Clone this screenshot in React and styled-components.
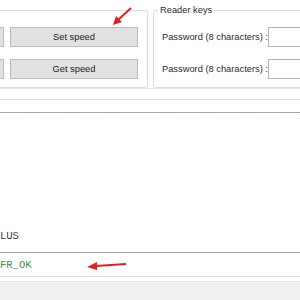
import React from "react";
import styled, { createGlobalStyle } from "styled-components";

const Global = createGlobalStyle`
  html, body {
    margin: 0;
    padding: 0;
    background: #ffffff;
  }
  body {
    font-family: "Liberation Sans", Arial, sans-serif;
    color: #2b2b2b;
  }
`;

export default function App() {
  return (
    <Window>
      <Global />
      <TopPanel>
        <SpeedGroup>
          <Button />
          <Button>Set speed</Button>
          <Button />
          <Button>Get speed</Button>
        </SpeedGroup>
        <KeysGroup>
          <Legend>Reader keys</Legend>
          <KeyRow>
            <Label>Password (8 characters) :</Label>
            <Input />
          </KeyRow>
          <KeyRow>
            <Label>Password (8 characters) :</Label>
            <Input />
          </KeyRow>
        </KeysGroup>
      </TopPanel>
      <Spacer />
      <Splitter />
      <LogArea>
        <LogLine>LUS</LogLine>
      </LogArea>
      <StatusBox>
        <StatusText>FR_OK</StatusText>
      </StatusBox>
      <BottomBar />

      {/* annotation arrows */}
      <Arrow style={{ left: 108, top: 4 }} width="28" height="24" viewBox="0 0 28 24">
        <line x1="23" y1="4" x2="10" y2="16" stroke="#e02020" strokeWidth="2" />
        <polygon points="5,21 8,12 14,18" fill="#e02020" />
      </Arrow>
      <Arrow style={{ left: 84, top: 259 }} width="46" height="14" viewBox="0 0 46 14">
        <line x1="42" y1="5" x2="12" y2="7" stroke="#e02020" strokeWidth="2" />
        <polygon points="3,8 13,3 13,11" fill="#e02020" />
      </Arrow>
    </Window>
  );
}

const Window = styled.div`
  position: relative;
  width: 300px;
  height: 300px;
  overflow: hidden;
  background: #ffffff;
  display: flex;
  flex-direction: column;
`;

const TopPanel = styled.div`
  display: flex;
  align-items: flex-start;
  height: 88px;
  flex-shrink: 0;
`;

const SpeedGroup = styled.div`
  box-sizing: border-box;
  flex-shrink: 0;
  margin-left: -60px;
  margin-top: 10px;
  width: 208px;
  height: 78px;
  border: 1px solid #dcdcdc;
  border-radius: 3px;
  padding: 16px 9px 0 8px;
  display: grid;
  grid-template-columns: 55px 128px;
  grid-auto-rows: 20px;
  column-gap: 6px;
  row-gap: 12px;
`;

const Button = styled.div`
  box-sizing: border-box;
  background: #e1e1e1;
  border: 1px solid #bcbcbc;
  display: flex;
  align-items: center;
  justify-content: center;
  font-size: 9.3px;
  color: #1e1e1e;
`;

const KeysGroup = styled.fieldset`
  box-sizing: border-box;
  flex: 1;
  margin: 2px -20px 0 5px;
  height: 86px;
  border: 1px solid #dcdcdc;
  border-radius: 3px;
  padding: 0 0 0 8px;
  display: flex;
  flex-direction: column;
  gap: 12px;
  min-width: 0;
`;

const Legend = styled.legend`
  font-size: 9.3px;
  line-height: 16px;
  padding: 0 2px;
  margin-left: -4px;
  color: #2b2b2b;
`;

const KeyRow = styled.div`
  display: flex;
  align-items: center;
  height: 20px;
  &:first-of-type {
    margin-top: 9px;
  }
`;

const Label = styled.span`
  font-size: 9.3px;
  color: #2b2b2b;
  width: 109px;
  white-space: nowrap;
`;

const Input = styled.div`
  box-sizing: border-box;
  height: 20px;
  width: 60px;
  border: 1px solid #b4b4b4;
  background: #fff;
`;

const Spacer = styled.div`
  height: 10px;
  border-top: 1px solid #e6e6e6;
  border-bottom: 1px solid #e3e3e3;
  flex-shrink: 0;
`;

const Splitter = styled.div`
  height: 5px;
  border-top: 1px solid #a6a6a6;
  border-bottom: 1px dashed #f0f0f0;
  flex-shrink: 0;
  margin-top: 12px;
`;

const LogArea = styled.div`
  flex: 1;
  display: flex;
  flex-direction: column;
  justify-content: flex-end;
  padding-bottom: 9px;
  border-bottom: 1px solid #a0a0a0;
`;

const LogLine = styled.div`
  font-family: "Liberation Mono", monospace;
  font-size: 10.5px;
  line-height: 14px;
  color: #3a3a3a;
  white-space: pre;
`;

const StatusBox = styled.div`
  height: 23px;
  display: flex;
  align-items: center;
  border-bottom: 1px solid #e0e0e0;
  flex-shrink: 0;
`;

const StatusText = styled(LogLine)`
  color: #3f9250;
`;

const BottomBar = styled.div`
  height: 18px;
  margin-top: 4px;
  background: #f0f0f0;
  border-top: 1px solid #e6e6e6;
  flex-shrink: 0;
`;

const Arrow = styled.svg`
  position: absolute;
  pointer-events: none;
`;
